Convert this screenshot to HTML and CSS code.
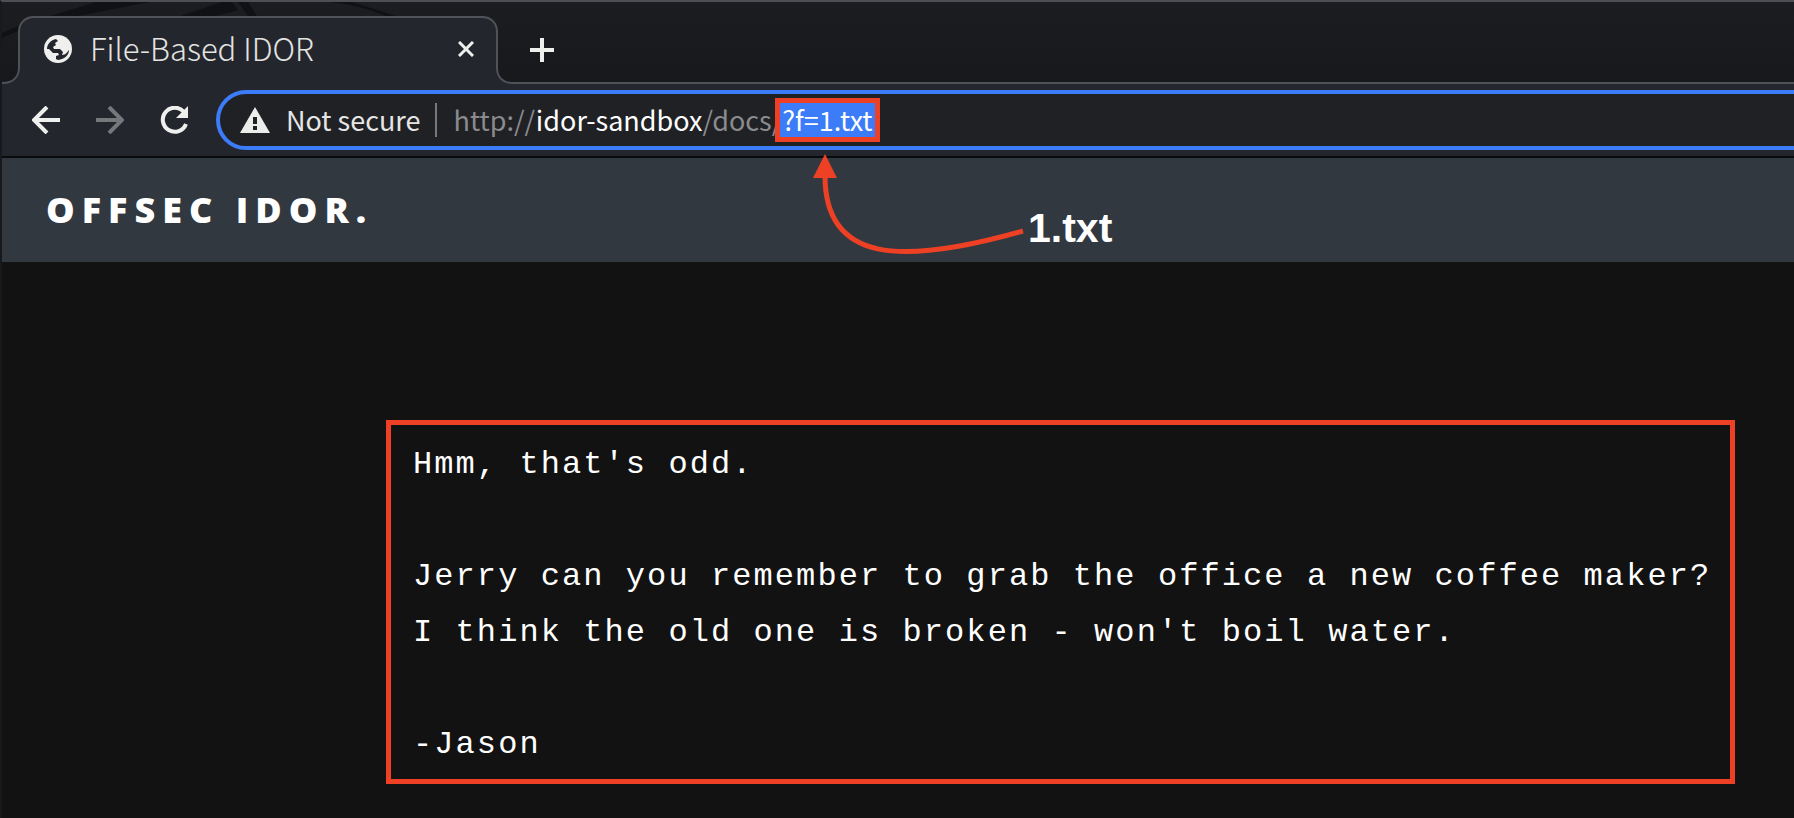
FILE: index.html
```html
<!DOCTYPE html>
<html lang="en">
<head>
<meta charset="utf-8">
<title>File-Based IDOR</title>
<link rel="stylesheet" href="styles.css">
</head>
<body>
<div class="window">
  <div class="tab-strip">
    <svg class="strip-art" width="420" height="80" viewBox="2 2 420 80" aria-hidden="true">
      <path d="M50 16 L96 2 H150 L78 16Z M180 16 L222 2 H232 L238 10 L216 16Z M238 2 H248 L257 16 H248Z M330 2 H352 L396 16 H386 Q360 5 330 2Z M2 33 L18 26 V31 L2 38Z"/>
    </svg>
    <div class="tab">
      <svg class="tab-shape" width="510" height="68" viewBox="2 16 510 68" aria-hidden="true">
        <path d="M2 83 C13 83 19 77 19 67 V32 C19 23 25 17 34 17 H482 C491 17 497 23 497 32 V68 C497 77 503 83 512 83 V84 H2Z" fill="#24262e"/>
        <path d="M2 83 C13 83 19 77 19 67 V32 C19 23 25 17 34 17 H482 C491 17 497 23 497 32 V68 C497 77 503 83 512 83" fill="none" stroke="#515257" stroke-width="2"/>
      </svg>
      <svg class="globe" width="28" height="28" viewBox="0 0 28 28" aria-hidden="true">
        <circle cx="14" cy="14" r="14" fill="#efefed"/>
        <path d="M3 14 C3 9 7 5 12 4 L14 6 L11 8 L12 10 L9 12 L10 14 L16 14 L19 17 L18 20 C22 20 23 17 25 15 C25 20 21 24 14 25 L12 24 V21 L15 20 L14 18 L9 18 L5 14Z" fill="#24262e"/>
      </svg>
      <span class="tab-title">File-Based IDOR</span>
      <button class="icon-button close" aria-label="Close tab"><svg width="16" height="16" viewBox="0 0 16 16"><path d="M1 1 L15 15 M15 1 L1 15" stroke="#efefed" stroke-width="3"/></svg></button>
    </div>
    <button class="icon-button new-tab" aria-label="New tab"><svg width="24" height="24" viewBox="0 0 24 24"><path d="M12 0 V24 M0 12 H24" stroke="#efefed" stroke-width="4"/></svg></button>
  </div>
  <div class="toolbar">
    <nav class="history">
      <button class="icon-button" aria-label="Back"><svg width="28" height="28" viewBox="0 0 28 28"><path d="M28 14 H3 M15 1 L2 14 L15 27" fill="none" stroke="#efefed" stroke-width="4"/></svg></button>
      <button class="icon-button" aria-label="Forward"><svg width="28" height="28" viewBox="0 0 28 28"><path d="M0 14 H25 M13 1 L26 14 L13 27" fill="none" stroke="#77787c" stroke-width="4"/></svg></button>
      <button class="icon-button" aria-label="Reload"><svg width="28" height="28" viewBox="0 0 28 28"><path d="M24 6 A12 12 0 1 0 26 18" fill="none" stroke="#efefed" stroke-width="4"/><path d="M28 0 V12 H16Z" fill="#efefed"/></svg></button>
    </nav>
    <div class="address-bar">
      <svg width="30" height="26" viewBox="0 0 30 26" aria-hidden="true"><path d="M15 0 L30 26 H0Z" fill="#ececea"/><path d="M13 10h4v7h-4zM13 19h4v4h-4z" fill="#202124"/></svg>
      <span class="security">Not secure</span>
      <div class="url" role="textbox" aria-label="Address" contenteditable="true" spellcheck="false"><span class="dim">http://</span>idor-sandbox<span class="dim">/docs/</span><span class="selected">?f=1.txt</span></div>
    </div>
  </div>
  <header class="site-header"><h1 class="brand">OFFSEC IDOR.</h1></header>
  <main class="content"><pre class="message">Hmm, that's odd.

Jerry can you remember to grab the office a new coffee maker?
I think the old one is broken - won't boil water.

-Jason</pre></main>
  <div class="callout">
    <svg width="212" height="104" viewBox="812 153 212 104" aria-hidden="true"><path d="M1023 231 C900 266 825 262 825 176" fill="none" stroke="#ee4024" stroke-width="5"/><path d="M825 154 L837 178 H813Z" fill="#ee4024"/></svg>
    <span class="callout-label">1.txt</span>
  </div>
</div>
</body>
</html>
```
FILE: styles.css
```css
* { box-sizing: border-box; }

body {
  margin: 0;
  background: #121212;
  color: #fff;
}

.window {
  position: relative;
  min-height: 100vh;
  overflow: hidden;
  border-top: 2px solid #4e4f54;
  border-left: 2px solid #18191d;
  font-family: "Noto Sans CJK SC", "Noto Sans", sans-serif;
}

.icon-button {
  display: flex;
  padding: 0;
  border: 0;
  background: none;
}

.tab-strip {
  position: relative;
  display: flex;
  align-items: flex-end;
  height: 82px;
  border-bottom: 2px solid #515257;
  background: linear-gradient(#1c1d21, #17181b);
}

.strip-art {
  position: absolute;
  top: 0;
  left: 0;
  fill: #101115;
}

.tab {
  position: relative;
  display: flex;
  align-items: center;
  gap: 18px;
  width: 496px;
  height: 66px;
  padding: 0 24px 0 42px;
}

.tab-shape {
  position: absolute;
  top: 0;
  left: 0;
}

.globe, .close { position: relative; }

.tab-title {
  position: relative;
  flex: 1;
  padding-bottom: 2px;
  color: #e4e4e2;
  font-size: 31px;
  font-weight: 300;
  line-height: 40px;
}

.new-tab {
  align-self: center;
  margin: 16px 0 0 32px;
}

.toolbar {
  display: flex;
  align-items: center;
  height: 74px;
  padding: 6px 0 6px 30px;
  border-bottom: 2px solid #0a0b0d;
  background: #24262e;
}

.history {
  display: flex;
  gap: 36px;
  margin-right: 28px;
}

.address-bar {
  display: flex;
  flex: 1;
  align-items: center;
  height: 60px;
  margin-right: -40px;
  padding-left: 20px;
  border: 4px solid #3c7cf8;
  border-radius: 30px;
  background: #202124;
  font-size: 27px;
  line-height: 34px;
  white-space: nowrap;
}

.security {
  margin-left: 16px;
  padding-right: 14px;
  border-right: 2px solid #77787b;
  color: #e6e6e6;
}

.url { margin-left: 17px; outline: 0; }

.dim { color: #8a8b8e; }

.selected {
  display: inline-block;
  margin-left: -2px;
  padding: 0 2px;
  outline: 5px solid #ee4024;
  background: #3c7cf8;
}

.site-header {
  display: flex;
  align-items: center;
  height: 104px;
  padding-left: 44px;
  background: #313840;
}

.brand {
  margin: 0;
  font-family: "Open Sans", sans-serif;
  font-size: 36px;
  font-weight: 800;
  letter-spacing: 7px;
  line-height: 48px;
}

.content { padding: 158px 59px 34px 384px; }

.message {
  margin: 0;
  padding: 12px 16px 6px 22px;
  border: 5px solid #ee4024;
  font-family: "Liberation Mono", monospace;
  font-size: 32px;
  letter-spacing: 0.065em;
  line-height: 56px;
}

.callout {
  position: absolute;
  top: 151px;
  left: 810px;
  display: flex;
}

.callout-label {
  margin: 51px 0 0 4px;
  font: bold 41px/48px "Liberation Sans", sans-serif;
}
```
